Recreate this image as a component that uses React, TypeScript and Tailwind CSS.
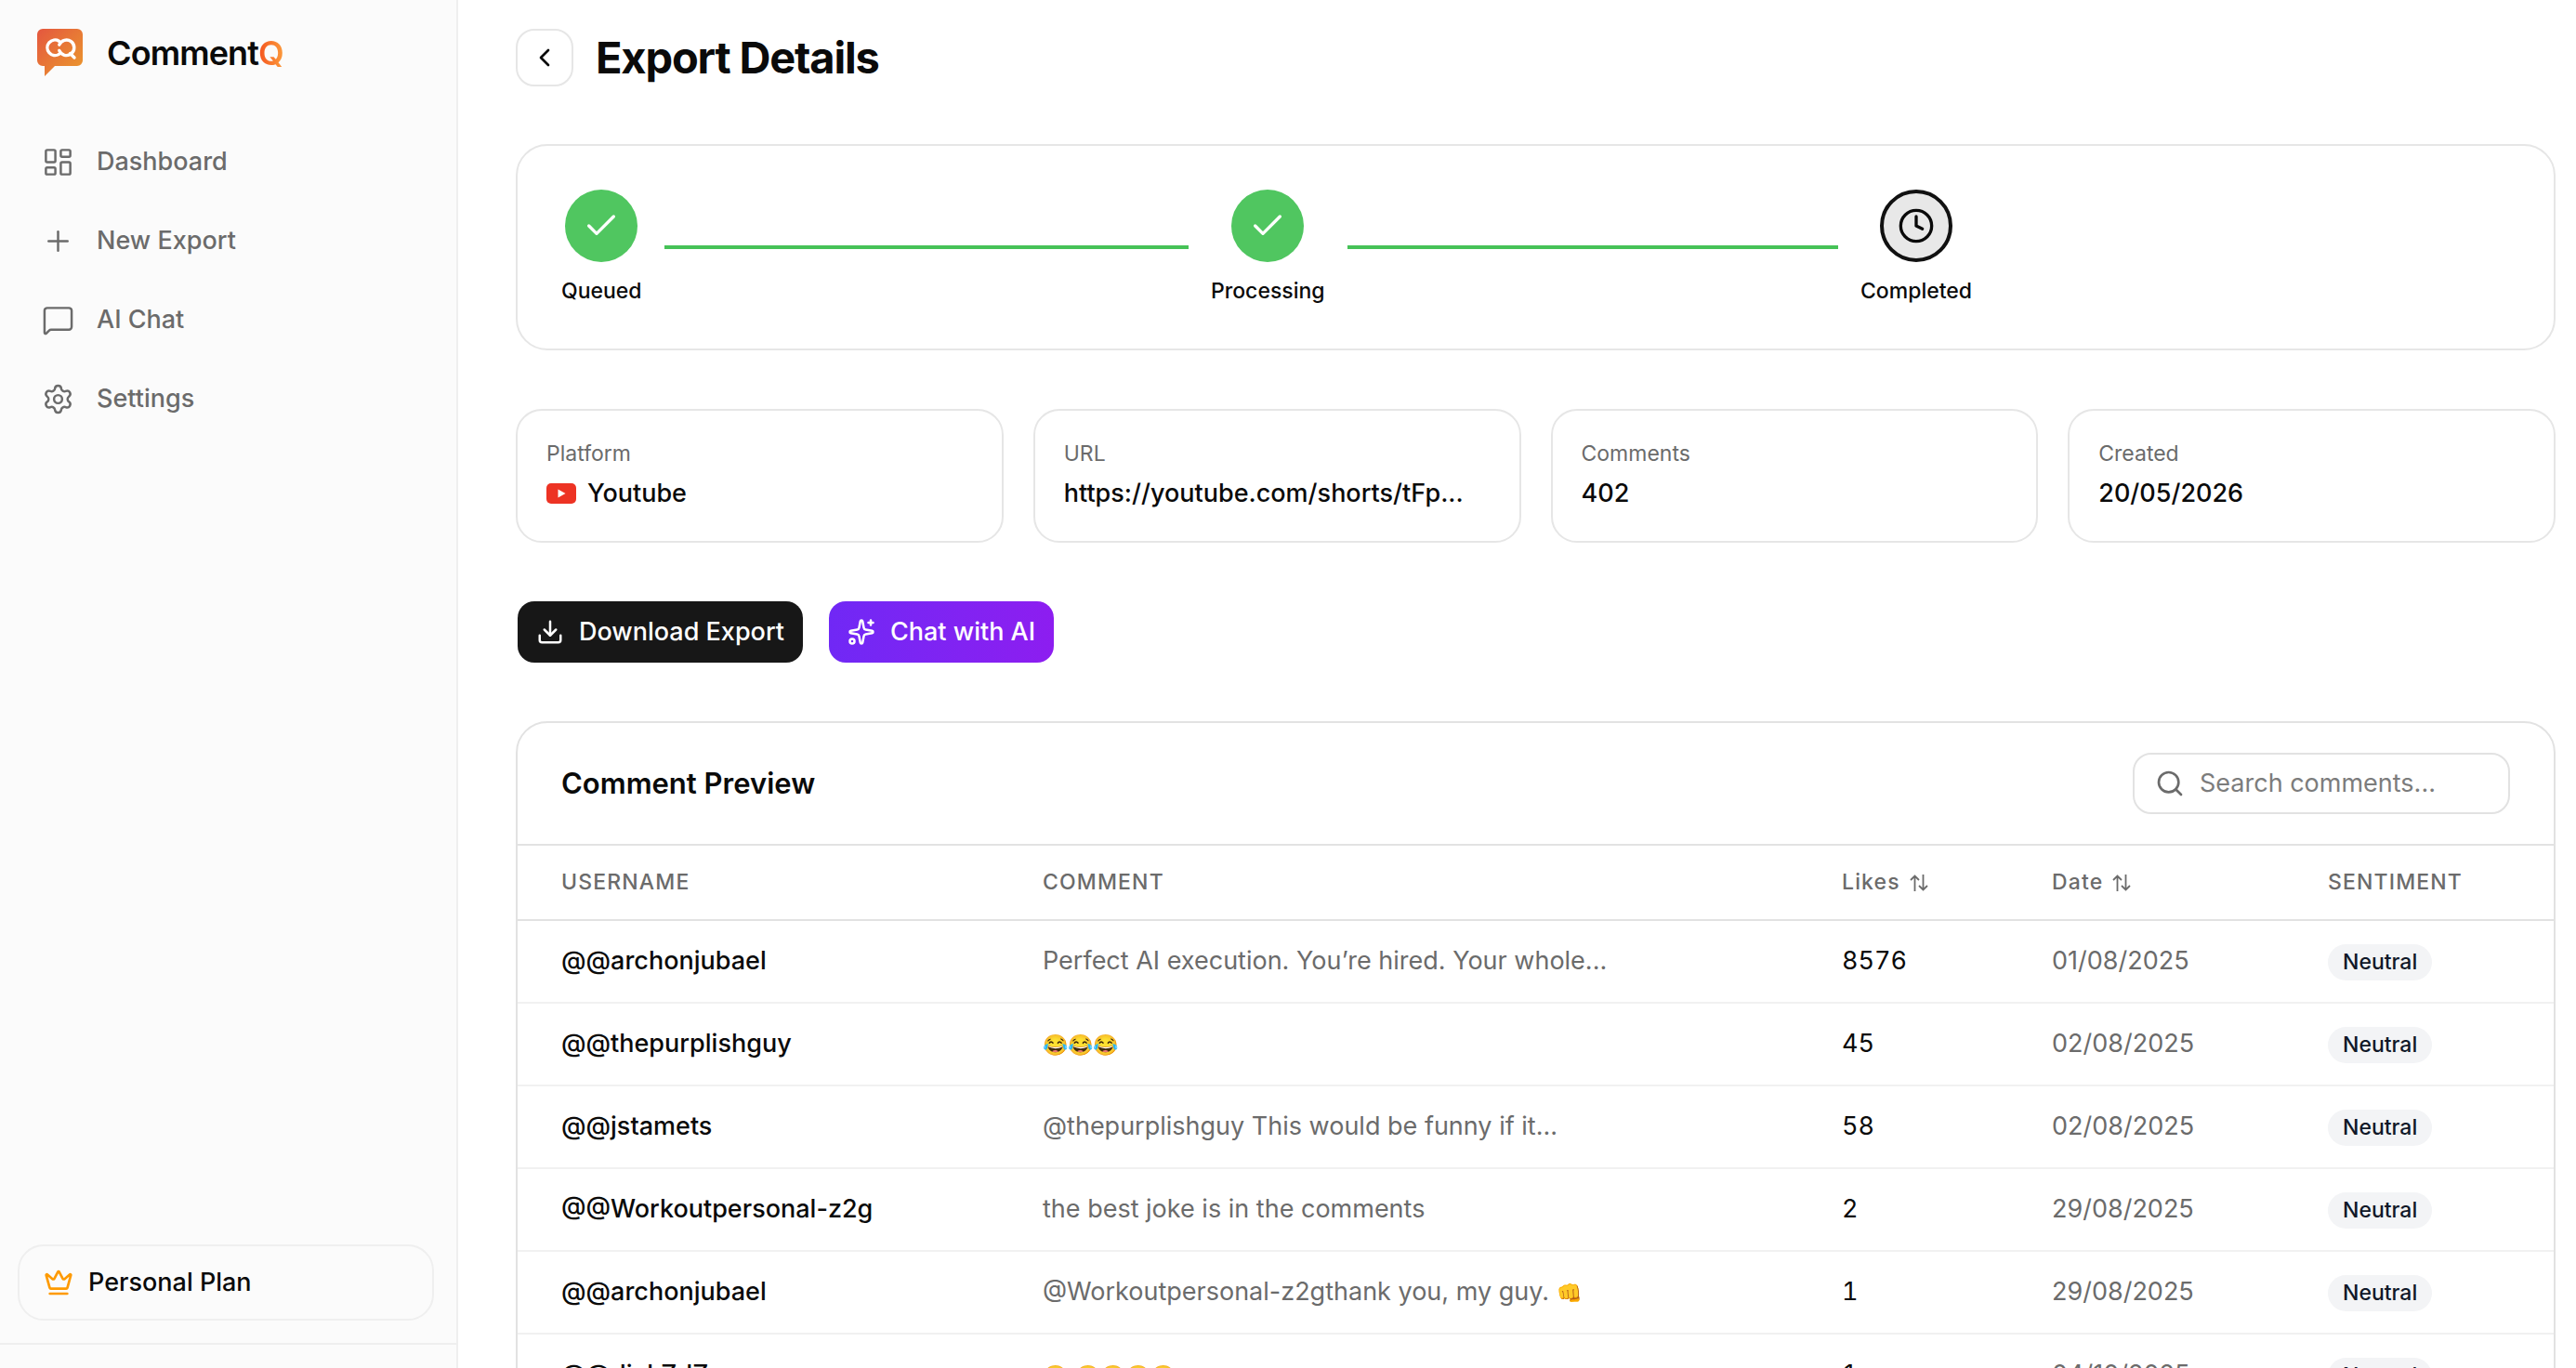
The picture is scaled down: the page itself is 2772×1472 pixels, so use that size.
import {
  Check,
  ChevronLeft,
  Clock,
  Crown,
  Download,
  LayoutDashboard,
  MessageSquare,
  Plus,
  Search,
  Settings,
  Sparkles,
} from "lucide-react";
import { ReactNode, useState } from "react";

type Comment = {
  username: string;
  comment: string;
  likes: number;
  date: string;
};

const comments: Comment[] = [
  {
    username: "@@archonjubael",
    comment: "Perfect AI execution. You’re hired. Your whole...",
    likes: 8576,
    date: "01/08/2025",
  },
  {
    username: "@@thepurplishguy",
    comment: "😂😂😂",
    likes: 45,
    date: "02/08/2025",
  },
  {
    username: "@@jstamets",
    comment: "@thepurplishguy This would be funny if it...",
    likes: 58,
    date: "02/08/2025",
  },
  {
    username: "@@Workoutpersonal-z2g",
    comment: "the best joke is in the comments",
    likes: 2,
    date: "29/08/2025",
  },
  {
    username: "@@archonjubael",
    comment: "@Workoutpersonal-z2gthank you, my guy. 👊",
    likes: 1,
    date: "29/08/2025",
  },
  {
    username: "@@dickZdZ",
    comment: "😂 😂😂😂😂",
    likes: 1,
    date: "04/10/2025",
  },
];

const navItems = [
  { label: "Dashboard", icon: LayoutDashboard },
  { label: "New Export", icon: Plus },
  { label: "AI Chat", icon: MessageSquare },
  { label: "Settings", icon: Settings },
];

function Logo() {
  return (
    <svg viewBox="0 0 52 54" className="h-[54px] w-[52px]" fill="none">
      <defs>
        <linearGradient id="logo" x1="0" y1="0" x2="1" y2="1">
          <stop offset="0" stopColor="#e4573f" />
          <stop offset="1" stopColor="#eb9a2c" />
        </linearGradient>
      </defs>
      <path
        d="M7 1h37a6 6 0 0 1 6 6v28a6 6 0 0 1-6 6H20L9 52V41H7a6 6 0 0 1-6-6V7a6 6 0 0 1 6-6z"
        fill="url(#logo)"
      />
      <g stroke="#fff" strokeWidth="3.4" strokeLinecap="round">
        <path d="M24.5 14.2a8.3 8.3 0 1 0 0 14.2" />
        <path d="M24.8 18.2a8.3 8.3 0 1 1 0 6.2" />
        <path d="M36.5 27.5l4.5 4.5" />
      </g>
    </svg>
  );
}

function YoutubeIcon() {
  return (
    <svg viewBox="0 0 32 24" className="h-6 w-8">
      <rect y="1" width="32" height="22" rx="5" fill="#ed3324" />
      <path d="M12.5 7.5v9l8-4.5z" fill="#fff" />
    </svg>
  );
}

function SortIcon() {
  return (
    <svg
      viewBox="0 0 20 18"
      className="h-[18px] w-5"
      fill="none"
      stroke="currentColor"
      strokeWidth="1.8"
    >
      <path d="M5.5 18V1.5M1 6l4.5-4.5L10 6" />
      <path d="M14.5 0v16.5M10 12l4.5 4.5L19 12" />
    </svg>
  );
}

function Sidebar() {
  return (
    <aside className="flex w-[493px] shrink-0 flex-col border-r-2 border-[#efefef] bg-[#fbfbfb]">
      <div className="flex h-[114px] items-center gap-6 px-[39px]">
        <Logo />
        <span className="text-4xl font-semibold tracking-tight">
          Comment
          <span className="bg-linear-to-r from-[#f4511e] to-[#fb9a3c] bg-clip-text text-transparent">
            Q
          </span>
        </span>
      </div>
      <nav className="flex flex-1 flex-col gap-2 px-5 pt-[22px]">
        {navItems.map(({ label, icon: Icon }) => (
          <a
            key={label}
            href="#"
            className="flex h-[77px] items-center gap-6 px-[25px] text-[27px] font-medium text-[#6b6b6b]"
          >
            <Icon className="size-[35px]" strokeWidth={1.7} />
            {label}
          </a>
        ))}
      </nav>
      <div className="pr-6 pb-6 pl-[19px]">
        <button className="flex h-[82px] w-full items-center gap-4 rounded-[28px] border-2 border-[#efefef] px-[26px] text-[27px] font-medium">
          <Crown className="size-8 text-amber-500" strokeWidth={2} />
          Personal Plan
        </button>
      </div>
      <div className="h-[27px] border-t-2 border-[#efefef]" />
    </aside>
  );
}

function Step({ label, children }: { label: string; children: ReactNode }) {
  return (
    <div className="flex flex-col items-center gap-4">
      {children}
      <span className="text-[23px] leading-[30px] font-medium">{label}</span>
    </div>
  );
}

function DoneStep({ label }: { label: string }) {
  return (
    <Step label={label}>
      <span className="flex size-[78px] items-center justify-center rounded-full bg-[#50c660] text-white">
        <Check className="size-10" strokeWidth={2} />
      </span>
    </Step>
  );
}

function Progress() {
  return (
    <section className="h-[222px] rounded-[34px] border-2 border-[#e6e6e6] px-[47px] pt-[47px]">
      <div className="grid grid-cols-3">
        <div className="flex items-center gap-6">
          <DoneStep label="Queued" />
          <div className="mr-6 h-1 flex-1 bg-[#46c257]" />
        </div>
        <div className="flex items-center gap-6">
          <DoneStep label="Processing" />
          <div className="mr-6 h-1 flex-1 bg-[#46c257]" />
        </div>
        <div className="flex items-center">
          <Step label="Completed">
            <span className="flex size-[78px] items-center justify-center rounded-full border-4 border-[#111] bg-[#e8e8e8]">
              <Clock className="size-10" strokeWidth={2} />
            </span>
          </Step>
        </div>
      </div>
    </section>
  );
}

function InfoCard({ label, children }: { label: string; children: ReactNode }) {
  return (
    <div className="flex h-[144px] min-w-0 flex-col rounded-[28px] border-2 border-[#e6e6e6] px-[31px] pt-7">
      <span className="text-[23px] leading-9 text-[#6b6b6b]">{label}</span>
      <div className="flex items-center gap-3 text-[27px] leading-[50px] font-medium">
        {children}
      </div>
    </div>
  );
}

// emoji glyphs run wider than the letters around them, so they get a smaller size
function CommentText({ text }: { text: string }) {
  return (
    <>
      {text.split(/(\p{Extended_Pictographic}+)/u).map((part, i) =>
        i % 2 ? (
          <span key={i} className="text-[22px]">
            {part}
          </span>
        ) : (
          part
        )
      )}
    </>
  );
}

function CommentTable({ rows }: { rows: Comment[] }) {
  return (
    <table className="w-full table-fixed border-collapse text-left text-[27px]">
      <colgroup>
        <col className="w-[543px]" />
        <col />
        <col className="w-[226px]" />
        <col className="w-[297px]" />
        <col className="w-[265px]" />
      </colgroup>
      <thead>
        <tr className="h-20 border-b-2 border-[#e2e2e2] text-[23px] tracking-wider text-[#6b6b6b] [&>th]:font-medium">
          <th className="pl-[47px]">USERNAME</th>
          <th className="pl-[22px]">COMMENT</th>
          <th className="pl-[22px]">
            <button className="flex items-center gap-2.5 tracking-wider">
              Likes
              <SortIcon />
            </button>
          </th>
          <th className="pl-[22px]">
            <button className="flex items-center gap-2.5 tracking-wider">
              Date
              <SortIcon />
            </button>
          </th>
          <th className="pl-[22px]">SENTIMENT</th>
        </tr>
      </thead>
      <tbody>
        {rows.map((row, i) => (
          <tr key={i} className="h-[89px] border-b-2 border-[#f1f1f1]">
            <td className="pl-[47px] font-medium">{row.username}</td>
            <td className="truncate pl-[22px] text-[#6b6b6b]">
              <CommentText text={row.comment} />
            </td>
            <td className="pl-[22px] tabular-nums">{row.likes}</td>
            <td className="pl-[22px] text-[#6b6b6b]">{row.date}</td>
            <td className="pl-[22px]">
              <span className="inline-flex h-[39px] items-center rounded-full bg-gray-100 px-4 align-middle text-[23px] font-medium text-gray-900">
                Neutral
              </span>
            </td>
          </tr>
        ))}
      </tbody>
    </table>
  );
}

export default function App() {
  const [query, setQuery] = useState("");

  const rows = comments.filter((c) =>
    (c.username + c.comment).toLowerCase().includes(query.toLowerCase())
  );

  return (
    <div className="flex h-screen overflow-hidden bg-white font-[Inter,sans-serif] text-[#0a0a0a]">
      <Sidebar />
      <main className="min-w-0 flex-1 overflow-hidden pt-[31px] pr-[22px] pl-[62px]">
        <header className="flex h-[62px] items-center gap-6">
          <button
            aria-label="Back"
            className="flex size-[62px] items-center justify-center rounded-[20px] border-2 border-[#e6e6e6]"
          >
            <ChevronLeft className="size-8" strokeWidth={2} />
          </button>
          <h1 className="text-[47px] font-bold tracking-tight">Export Details</h1>
        </header>

        <div className="mt-[62px] flex flex-col gap-[63px]">
          <Progress />

          <section className="grid grid-cols-4 gap-8">
            <InfoCard label="Platform">
              <YoutubeIcon />
              Youtube
            </InfoCard>
            <InfoCard label="URL">https://youtube.com/shorts/tFp...</InfoCard>
            <InfoCard label="Comments">402</InfoCard>
            <InfoCard label="Created">20/05/2026</InfoCard>
          </section>

          <div className="flex gap-7 pl-0.5 text-[27px] font-medium text-white">
            <button className="flex h-[66px] items-center gap-4 rounded-[18px] bg-[#171717] px-5">
              <Download className="size-[30px]" strokeWidth={2} />
              Download Export
            </button>
            <button className="flex h-[66px] items-center gap-4 rounded-[18px] bg-linear-to-r from-[#7028f5] to-[#8d1df0] px-5">
              <Sparkles className="size-[30px]" strokeWidth={2} />
              Chat with AI
            </button>
          </div>

          <section className="rounded-[34px] border-2 border-[#e2e2e2]">
            <div className="flex h-[132px] items-center justify-between border-b-2 border-[#e2e2e2] px-[47px]">
              <h2 className="text-[31px] font-semibold">Comment Preview</h2>
              <label className="flex h-[66px] w-[406px] items-center gap-4 rounded-[20px] border-2 border-[#e2e2e2] px-[22px]">
                <Search className="size-8 shrink-0 text-[#6b6b6b]" strokeWidth={2} />
                <input
                  value={query}
                  onChange={(e) => setQuery(e.target.value)}
                  aria-label="Search comments"
                  placeholder="Search comments..."
                  className="w-full text-[27px] outline-0 placeholder:text-[#7c7c7c]"
                />
              </label>
            </div>
            <CommentTable rows={rows} />
          </section>
        </div>
      </main>
    </div>
  );
}
